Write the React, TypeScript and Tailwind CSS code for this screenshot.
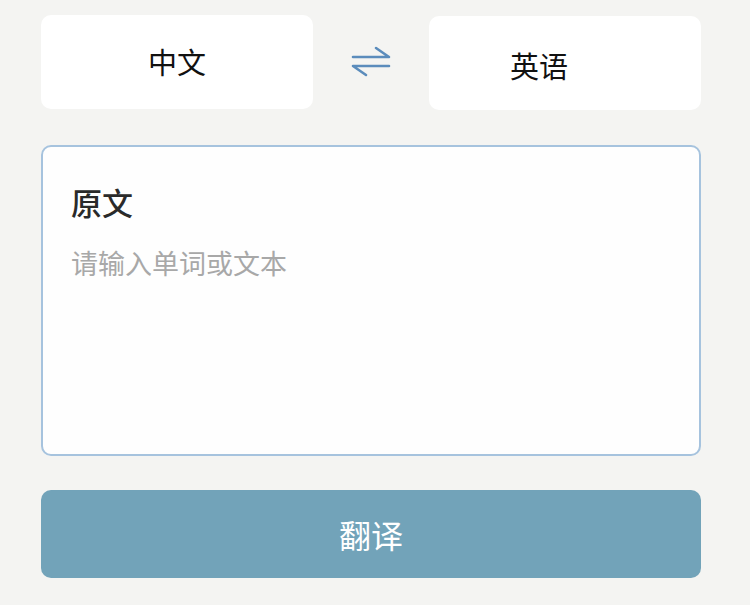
import React from "react"

const font = { fontFamily: '"Noto Sans CJK SC", "Noto Sans", sans-serif' }

function LangBox({ label, className = "" }: { label: string; className?: string }) {
  return <div className={`flex items-center justify-center w-[272px] h-[94px] rounded-[10px] bg-white text-[29px] text-[#111] ${className}`}>
    {label}
  </div>
}

function SwapIcon() {
  return <svg width="44" height="34" viewBox="0 0 44 34" fill="none" stroke="#5b8cbc" strokeWidth="2.6" strokeLinecap="round" strokeLinejoin="round">
    <path d="M4 12 H40 L27 3" />
    <path d="M40 21 H4 L17 30" />
  </svg>
}

export default function App() {
  return <div style={font} className="w-[750px] h-[605px] bg-[#f4f4f2] pl-[41px] pt-[14px]">
    <div className="w-[660px] flex items-center justify-between">
      <LangBox label="中文" />
      <SwapIcon />
      <LangBox label="英语" className="mt-[2px] pr-[52px] pt-[6px]" />
    </div>

    <div className="mt-[35px] w-[660px] h-[311px] rounded-[10px] border-2 border-[#a6c3de] bg-[#fefefe] pl-[28px] pt-[36px]">
      <div className="text-[31px] font-medium leading-[38px] text-[#2a2a2a]">原文</div>
      <div className="mt-[24px] text-[27px] leading-[36px] text-[#a8a8a8]">请输入单词或文本</div>
    </div>

    <button className="mt-[34px] w-[660px] h-[88px] rounded-[10px] bg-[#72a3b9] text-white text-[32px] flex items-center justify-center">
      翻译
    </button>
  </div>
}
